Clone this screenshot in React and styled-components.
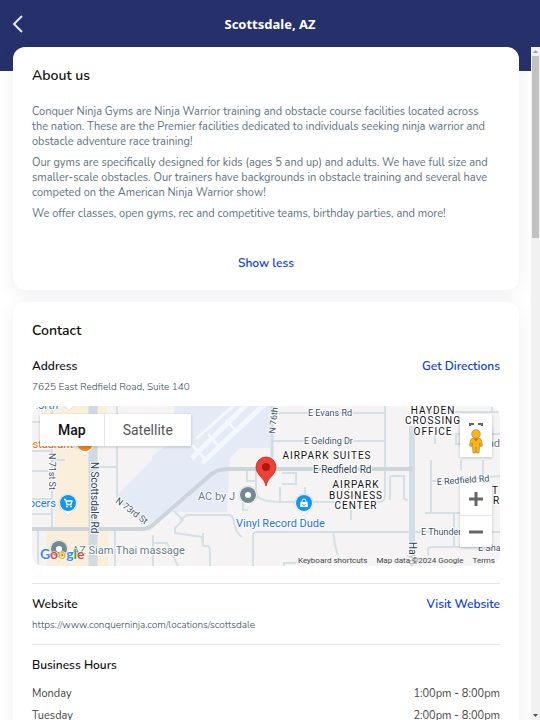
import React from "react";
import styled, { createGlobalStyle } from "styled-components";

const GlobalStyle = createGlobalStyle`
  * {
    box-sizing: border-box;
  }

  body {
    margin: 0;
    font-family: "Nunito", "Lato", sans-serif;
    color: #111;
  }

  button {
    border: 0;
    padding: 0;
    background: none;
    font: inherit;
    cursor: pointer;
  }
`;

const Page = styled.div`
  height: 100vh;
  display: flex;
  flex-direction: column;
  background: linear-gradient(#26306b 71px, #fff 71px);
`;

const Header = styled.header`
  flex: none;
  height: 47px;
  display: grid;
  grid-template-columns: 40px 1fr 40px;
  align-items: center;
`;

const BackButton = styled.button`
  width: 40px;
  height: 47px;
  padding-left: 12px;
  display: flex;
  align-items: center;
`;

const HeaderTitle = styled.h1`
  margin: 0;
  font-family: "Noto Sans", "Open Sans", sans-serif;
  font-size: 13px;
  font-weight: 700;
  text-align: center;
  color: #fff;
`;

const Body = styled.div`
  flex: 1;
  min-height: 0;
  display: flex;
`;

const Content = styled.main`
  flex: 1;
  min-width: 0;
  overflow-y: auto;
  scrollbar-width: none;
  padding: 0 12px 12px 13px;
  display: flex;
  flex-direction: column;
  gap: 12px;
`;

const ScrollTrack = styled.div`
  flex: none;
  width: 9px;
  display: flex;
  flex-direction: column;
  align-items: center;
  background: #f1f1f1;
`;

const ScrollArrow = styled.svg`
  flex: none;
  width: 9px;
  height: 9px;
  fill: ${(props) => (props.$active ? "#505050" : "#a3a3a3")};
`;

const ScrollThumb = styled.div`
  width: 7px;
  height: 27%;
  margin-bottom: auto;
  background: #c1c1c1;
`;

const Card = styled.section`
  flex: none;
  padding: 19px 19px 17px;
  border-radius: 12px;
  background: #fff;
  box-shadow: 0 4px 18px rgba(50, 50, 93, 0.08);
`;

const CardTitle = styled.h2`
  margin: 0 0 ${(props) => props.$gap}px;
  font-size: 14px;
  font-weight: 600;
  line-height: 20px;
`;

const Paragraph = styled.p`
  margin: 0 0 6px;
  padding-right: 8px;
  font-size: 11px;
  line-height: 15px;
  color: #5d727d;
`;

const ShowLess = styled.button`
  display: block;
  margin: 32px auto 0;
  font-size: 12px;
  font-weight: 600;
  line-height: 20px;
  color: #0a3be0;
`;

const Row = styled.div`
  display: flex;
  justify-content: space-between;
  align-items: center;
`;

const Label = styled.h3`
  margin: 0;
  font-size: 12px;
  font-weight: 600;
  line-height: 20px;
`;

const ActionLink = styled.a`
  font-size: 12px;
  font-weight: 600;
  line-height: 20px;
  color: #0a3be0;
  text-decoration: none;
`;

const Detail = styled.div`
  margin: 3px 0 11px;
  font-size: 10px;
  font-weight: 300;
  line-height: 16px;
  color: #2f4a57;
`;

const Divider = styled.hr`
  margin: 0 0 10px;
  border: 0;
  border-top: 1px solid #e3e5e6;
`;

const HoursTable = styled.table`
  width: 100%;
  margin-top: 8px;
  border-collapse: collapse;
  font-size: 11px;
  line-height: 22px;
  color: #444;

  th,
  td {
    padding: 0;
    font-weight: 400;
    text-align: left;
  }

  td {
    text-align: right;
  }
`;

const MapBox = styled.div`
  position: relative;
  height: 160px;
  margin-bottom: 17px;
  border-radius: 12px;
  overflow: hidden;
  font-family: Roboto, sans-serif;
`;

const MapSvg = styled.svg`
  display: block;
  width: 100%;
  height: 100%;
  font-family: Roboto, sans-serif;
`;

const MapTypes = styled.div`
  position: absolute;
  top: 8px;
  left: 8px;
  display: flex;
  background: #fff;
  box-shadow: 0 1px 3px rgba(0, 0, 0, 0.2);
`;

const MapType = styled.button`
  height: 32px;
  padding: 0 18px;
  font-size: 14px;
  font-weight: ${(props) => (props.$active ? 500 : 400)};
  color: ${(props) => (props.$active ? "#111" : "#565656")};

  & + & {
    border-left: 1px solid #e6e6e6;
  }
`;

const MapControl = styled.div`
  position: absolute;
  right: 8px;
  top: ${(props) => props.$top}px;
  width: 32px;
  background: #fff;
  box-shadow: 0 1px 3px rgba(0, 0, 0, 0.2);
`;

const ControlButton = styled.button`
  width: 32px;
  height: ${(props) => props.$height || 32}px;
  display: flex;
  align-items: center;
  justify-content: center;

  & + & {
    border-top: 1px solid #e6e6e6;
  }
`;

const MapFooter = styled.div`
  position: absolute;
  right: 0;
  bottom: 0;
  display: flex;
  gap: 9px;
  padding: 0 5px 0 2px;
  font-size: 8px;
  line-height: 11px;
  color: #444;
  background: rgba(245, 245, 245, 0.7);

  button,
  a {
    color: inherit;
    text-decoration: none;
  }
`;

const MINOR_ROADS = [
  "M20 0V123",
  "M0 16H20M0 45H20M20 54H33M0 65H20M0 93H20M0 108H20M6 123V160",
  "M85 0V88Q85 92 90 96L106 109Q110 113 110 119",
  "M65 61H85M65 24H85",
  "M83 123V160M121 129V160M121 137H135L146 160",
  "M148 114L155 109H196Q201 109 202 116Q203 126 210 131",
  "M142 105L151 114L143 122V127L170 131L171 140",
  "M171 127V140M171 140H175Q178 140 178 144V160",
  "M240 7H353M240 35H353",
  "M353 0V90Q353 96 346 96H301",
  "M224 64V86Q224 92 232 94Q240 96 248 96H301",
  "M248 81V96M273 81V96",
  "M215 64V75H224M250 67H264V78H250",
  "M211 95V104H216",
  "M221 160V129Q221 126 225 126H468",
  "M301 126Q302 138 306 150M252 160V157H268",
  "M358 94V72Q358 70 360 70H372V92Q372 94 376 94",
  "M399 54V107M393 107H430M422 107V141M396 150V144Q396 141 400 141H468",
  "M399 75H412L468 70M429 54V64M451 54V70",
  "M384 6H468M403 27V38M468 28H424V38H430",
  "M460 0V6M319 104V114",
];

const ROAD_LABELS = [
  { text: "E Evans Rd", x: 276, y: 10 },
  { text: "E Gelding Dr", x: 272, y: 38 },
  { text: "N 76th St", x: 243, y: 28, rotate: -84 },
  { text: "N 71st St", x: 17, y: 47, rotate: 90 },
  { text: "N 73rd St", x: 83, y: 96, rotate: 37 },
  { text: "E Redfield Rd", x: 405, y: 79, rotate: -4 },
  { text: "E Thunderbird Rd", x: 389, y: 129 },
  { text: "E Shangri La", x: 446, y: 145 },
];

const AREA_LABELS = [
  { text: "HAYDEN", x: 401, y: 8 },
  { text: "CROSSING", x: 401, y: 18 },
  { text: "OFFICE", x: 401, y: 29 },
  { text: "AIRPARK SUITES", x: 295, y: 53 },
  { text: "AIRPARK", x: 324, y: 82 },
  { text: "BUSINESS", x: 324, y: 93 },
  { text: "CENTER", x: 324, y: 103 },
];

const HOURS = [
  { day: "Monday", time: "1:00pm - 8:00pm" },
  { day: "Tuesday", time: "2:00pm - 8:00pm" },
];

function Marker({ x, y, color, children }) {
  return (
    <g transform={`translate(${x} ${y})`}>
      <path
        d="M0 13C-2 9 -9 7 -9 0A9 9 0 1 1 9 0C9 7 2 9 0 13Z"
        fill="#fff"
        stroke="#c9ced2"
        strokeWidth="0.6"
      />
      <circle r="8" fill={color} />
      {children}
    </g>
  );
}

function MapDrawing() {
  return (
    <MapSvg viewBox="0 0 468 160" preserveAspectRatio="xMidYMid slice">
      <rect width="468" height="160" fill="#f5f3f4" />
      {/* commercial strip and airport */}
      <path d="M9 0H75V40H65V124H76V160H14V124H23V40H9Z" fill="#f9efdb" />
      <path
        d="M85 89L120 54V50L142 34V0H238V42H208L198 52L195 106H141L113 119L85 96Z"
        fill="#e4eaf6"
      />
      <path d="M65 40H85V124H65Z" fill="#f5f3f4" />
      <g stroke="#f4f7fd" fill="none">
        <path d="M160 52L216 -3M170 57L236 -5" strokeWidth="5" />
        <path d="M160 39L172 52M176 28L186 40M194 14L205 26M164 33L208 -6" strokeWidth="3" />
      </g>

      <g stroke="#d5e0e6" strokeWidth="2" fill="none">
        {MINOR_ROADS.map((d) => (
          <path key={d} d={d} />
        ))}
      </g>
      <path d="M240 0V64" stroke="#d0dbe2" strokeWidth="3" />
      <path d="M61 0V160" stroke="#cfdae2" strokeWidth="9" />
      <path d="M380 20V160" stroke="#d2dee6" strokeWidth="6" />
      <path
        d="M0 123H110Q117 123 122 118L176 71Q184 63 196 63H380"
        stroke="#cbd5db"
        strokeWidth="4"
        fill="none"
      />

      <Marker x={37} y={-8} color="#1a96f0" />
      <Marker x={53} y={37} color="#f5821f" />
      <Marker x={36} y={97} color="#1395f5">
        <path
          d="M-4 -3.5H-2.5L-1 1.5H3L4 -2H-2"
          fill="none"
          stroke="#fff"
          strokeWidth="1.3"
        />
        <circle cx="-1" cy="3.5" r="0.9" fill="#fff" />
        <circle cx="3" cy="3.5" r="0.9" fill="#fff" />
      </Marker>
      <Marker x={272} y={97} color="#1395f5">
        <path d="M-3.5 -1H3.5L4 4H-4Z" fill="#fff" />
        <path d="M-2 0V-2A2 2 0 0 1 2 -2V0" fill="none" stroke="#fff" />
        <path d="M-1.5 1A1.5 1.5 0 0 0 1.5 1" fill="none" stroke="#1395f5" strokeWidth="0.8" />
      </Marker>
      <Marker x={216} y={89} color="#738a95">
        <circle r="3" fill="#fff" />
      </Marker>
      <Marker x={27} y={143} color="#738a95">
        <circle r="3" fill="#fff" />
      </Marker>

      <g stroke="#fff" strokeWidth="2" paintOrder="stroke" strokeLinejoin="round">
        <g fontSize="9" fill="#3c5068">
          {ROAD_LABELS.map(({ text, x, y, rotate = 0 }) => (
            <text key={text} transform={`translate(${x} ${y}) rotate(${rotate})`}>
              {text}
            </text>
          ))}
        </g>
        <g fontSize="10" fill="#2a3f5a">
          <text x="281" y="67">E Redfield Rd</text>
          <text transform="translate(59 56) rotate(90)">N Scottsdale Rd</text>
          <text transform="translate(377 136) rotate(90)">Hayden Rd</text>
        </g>
        <g fontSize="10" fill="#111" textAnchor="middle" letterSpacing="1">
          {AREA_LABELS.map(({ text, x, y }) => (
            <text key={text + y} x={x} y={y}>
              {text}
            </text>
          ))}
        </g>
        <g fontSize="10" fill="#111">
          <text x="460" y="88">T</text>
          <text x="461" y="98">R</text>
        </g>
        <g fontSize="11">
          <text x="166" y="94" fill="#667b85">AC by J</text>
          <text x="40" y="148" fill="#667b85">AZ Siam Thai massage</text>
          <text x="468" y="41" textAnchor="end" fill="#667b85">nd</text>
          <text x="204" y="121" fill="#1a73e8">Vinyl Record Dude</text>
          <text x="24" y="101" textAnchor="end" fill="#1a73e8">Grocers</text>
          <text x="26" y="3" textAnchor="end" fill="#1a73e8">North</text>
          <text x="41" y="42" textAnchor="end" fill="#e8711a">Restaurant</text>
        </g>
      </g>

      <path
        d="M234 80C233 72 224 69 224 61A10 10 0 1 1 244 61C244 69 235 72 234 80Z"
        fill="#ea4335"
        stroke="#c5221f"
        strokeWidth="0.8"
      />
      <circle cx="234" cy="61" r="4" fill="#b31412" />

      <text
        x="8"
        y="153"
        fontFamily="Lato, sans-serif"
        fontSize="14"
        fontWeight="700"
        stroke="#fff"
        strokeWidth="1"
        paintOrder="stroke"
      >
        <tspan fill="#4285f4">G</tspan>
        <tspan fill="#ea4335">o</tspan>
        <tspan fill="#fbbc04">o</tspan>
        <tspan fill="#4285f4">g</tspan>
        <tspan fill="#34a853">l</tspan>
        <tspan fill="#ea4335">e</tspan>
      </text>
    </MapSvg>
  );
}

function LocationMap() {
  return (
    <MapBox>
      <MapDrawing />
      <MapTypes>
        <MapType $active>Map</MapType>
        <MapType>Satellite</MapType>
      </MapTypes>
      <MapControl $top={8}>
        <ControlButton aria-label="Toggle fullscreen view">
          <svg width="14" height="14" fill="none" stroke="#666" strokeWidth="2">
            <path d="M1 5V1H5M9 1H13V5M13 9V13H9M5 13H1V9" />
          </svg>
        </ControlButton>
      </MapControl>
      <MapControl $top={20}>
        <ControlButton $height={31} aria-label="Street View">
          <svg width="14" height="25" viewBox="0 0 14 25">
            <path
              d="M3 9.5H11Q13 10 13.3 17L11.5 17.5L10.7 14L10 24H7.6L7 18L6.4 24H4L3.3 14L2.5 17.5L0.7 17Q1 10 3 9.5Z"
              fill="#fbb317"
              stroke="#b9852a"
              strokeWidth="0.7"
            />
            <circle cx="7" cy="5" r="4.3" fill="#fbb317" stroke="#b9852a" strokeWidth="0.7" />
            <path d="M4.5 9.5H9.5L7 12.5Z" fill="#e0702a" />
          </svg>
        </ControlButton>
      </MapControl>
      <MapControl $top={77}>
        <ControlButton aria-label="Zoom in">
          <svg width="14" height="14" stroke="#666" strokeWidth="3">
            <path d="M7 0V14M0 7H14" />
          </svg>
        </ControlButton>
        <ControlButton aria-label="Zoom out">
          <svg width="14" height="14" stroke="#666" strokeWidth="3">
            <path d="M0 7H14" />
          </svg>
        </ControlButton>
      </MapControl>
      <MapFooter>
        <button>Keyboard shortcuts</button>
        <span>Map data ©2024 Google</span>
        <a href="#terms">Terms</a>
      </MapFooter>
    </MapBox>
  );
}

export default function LocationDetails() {
  return (
    <Page>
      <GlobalStyle />
      <Header>
        <BackButton aria-label="Back">
          <svg width="11" height="18" fill="none" stroke="#e6e8f2" strokeWidth="2">
            <path d="M10 1L2 9L10 17" />
          </svg>
        </BackButton>
        <HeaderTitle>Scottsdale, AZ</HeaderTitle>
      </Header>
      <Body>
        <Content>
          <Card>
            <CardTitle $gap={18}>About us</CardTitle>
            <Paragraph>
              Conquer Ninja Gyms are Ninja Warrior training and obstacle course
              facilities located across the nation. These are the Premier
              facilities dedicated to individuals seeking ninja warrior and
              obstacle adventure race training!
            </Paragraph>
            <Paragraph>
              Our gyms are specifically designed for kids (ages 5 and up) and
              adults. We have full size and smaller-scale obstacles. Our
              trainers have backgrounds in obstacle training and several have
              competed on the American Ninja Warrior show!
            </Paragraph>
            <Paragraph>
              We offer classes, open gyms, rec and competitive teams, birthday
              parties, and more!
            </Paragraph>
            <ShowLess>Show less</ShowLess>
          </Card>
          <Card>
            <CardTitle $gap={15}>Contact</CardTitle>
            <Row>
              <Label>Address</Label>
              <ActionLink href="#directions">Get Directions</ActionLink>
            </Row>
            <Detail>7625 East Redfield Road, Suite 140</Detail>
            <LocationMap />
            <Divider />
            <Row>
              <Label>Website</Label>
              <ActionLink href="#website">Visit Website</ActionLink>
            </Row>
            <Detail>https://www.conquerninja.com/locations/scottsdale</Detail>
            <Divider />
            <Label>Business Hours</Label>
            <HoursTable>
              <tbody>
                {HOURS.map(({ day, time }) => (
                  <tr key={day}>
                    <th scope="row">{day}</th>
                    <td>{time}</td>
                  </tr>
                ))}
              </tbody>
            </HoursTable>
          </Card>
        </Content>
        <ScrollTrack aria-hidden="true">
          <ScrollArrow viewBox="0 0 9 9">
            <path d="M2 6L4.5 3L7 6Z" />
          </ScrollArrow>
          <ScrollThumb />
          <ScrollArrow viewBox="0 0 9 9" $active>
            <path d="M2 3L4.5 6L7 3Z" />
          </ScrollArrow>
        </ScrollTrack>
      </Body>
    </Page>
  );
}
